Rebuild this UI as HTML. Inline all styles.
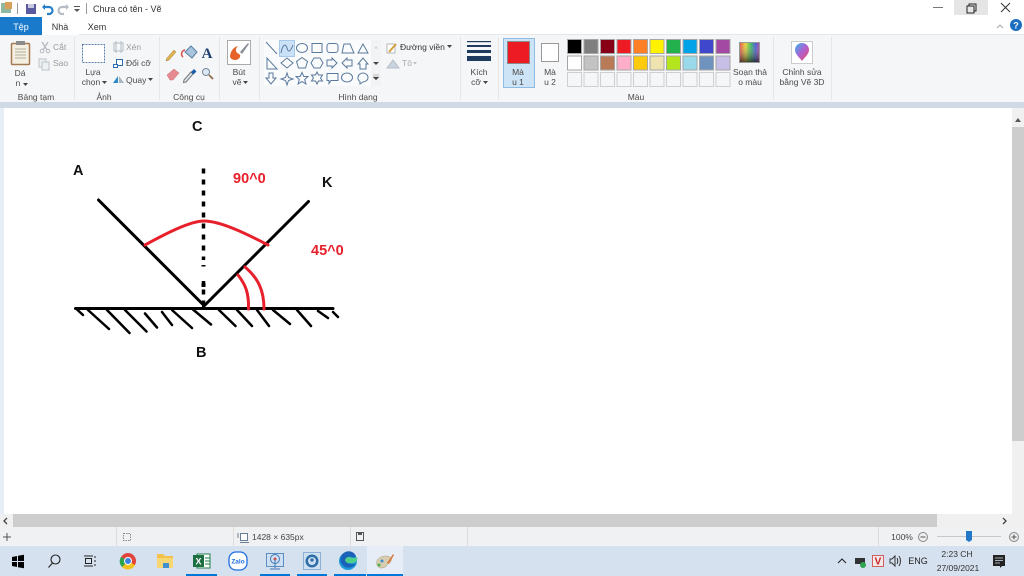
<!DOCTYPE html>
<html><head><meta charset="utf-8"><style>
html,body{margin:0;padding:0;background:#fff;overflow:hidden;width:1024px;height:576px}
svg{display:block}
text{font-family:"Liberation Sans",sans-serif;font-size:8.5px;fill:#4a4a4a}
.m{text-anchor:middle}
.s{fill:none;stroke:#5a7a9c;stroke-width:1}
.c{stroke:#a6a6a6;stroke-width:1}
.e{fill:#f5f6f7;stroke:#cfcfcf;stroke-width:1}
.d{font-weight:bold;font-size:14.5px;fill:#111}
.r{font-weight:bold;font-size:14.5px;fill:#e8202c}
.g{fill:none;stroke:#000;stroke-width:3;stroke-linecap:round}
.rl{fill:none;stroke:#e8202c;stroke-width:3;stroke-linecap:round;stroke-linejoin:round}
</style></head><body>
<svg width="1024" height="576" viewBox="0 0 1024 576" xmlns="http://www.w3.org/2000/svg">
<rect width="1024" height="576" fill="#fff"/>
<!-- title bar -->
<rect x="1" y="3" width="10" height="10" fill="#8fb8a0"/><rect x="5" y="2" width="7" height="7" fill="#d9a05b"/>
<rect x="17" y="3" width="1" height="11" fill="#999"/>
<rect x="26" y="4" width="10" height="10" fill="#5a5aa0"/><rect x="28" y="4" width="6" height="4" fill="#c8c8e0"/>
<path d="M43 7h6a3 3 0 0 1 0 7h-2" fill="none" stroke="#2a7fc9" stroke-width="2.2"/><path d="M45 4v6l-3-3z" fill="#2a7fc9"/>
<path d="M68 7h-6a3 3 0 0 0 0 7h2" fill="none" stroke="#b5bcc4" stroke-width="2.2"/><path d="M66 4v6l3-3z" fill="#b5bcc4"/>
<rect x="74" y="6" width="6" height="1" fill="#555"/><path d="M74 9h6l-3 3z" fill="#555"/>
<rect x="86" y="3" width="1" height="11" fill="#999"/>
<text x="93" y="12" style="font-size:9px;fill:#333">Chưa có tên - Vẽ</text>
<rect x="954" y="0" width="34" height="15" fill="#e5e5e5"/>
<rect x="933" y="7" width="10" height="1" fill="#777"/>
<rect x="967" y="6" width="7" height="7" fill="none" stroke="#222"/><path d="M969 6V4h7v7h-2" fill="none" stroke="#222"/>
<path d="M1001 3l9 9M1010 3l-9 9" stroke="#333" fill="none"/>
<!-- tabs -->
<rect x="0" y="17" width="42" height="18" fill="#1979ca"/>
<text x="21" y="30" class="m" style="fill:#fff;font-size:9px">Tệp</text>
<rect x="42" y="17" width="37" height="19" fill="#fff"/>
<text x="60" y="30" class="m" style="font-size:9px;fill:#333">Nhà</text>
<text x="97" y="30" class="m" style="font-size:9px;fill:#333">Xem</text>
<path d="M997 28l3-3 3 3" fill="none" stroke="#aaa"/>
<circle cx="1016" cy="25" r="6" fill="#1b6ec2"/><text x="1016" y="28.500" class="m" style="fill:#fff;font-size:9px;font-weight:bold">?</text>
<!-- ribbon -->
<rect x="0" y="35" width="1024" height="67" fill="#f5f6f7"/>
<rect x="79" y="34" width="945" height="1" fill="#e6e7e8"/><rect x="0" y="35" width="42" height="1" fill="#e6e7e8"/>
<rect x="0" y="102" width="1024" height="6" fill="#cfdae6"/>
<g fill="#e4e6e8">
<rect x="74" y="37" width="1" height="63"/><rect x="159" y="37" width="1" height="63"/><rect x="219" y="37" width="1" height="63"/><rect x="259" y="37" width="1" height="63"/><rect x="460" y="37" width="1" height="63"/><rect x="498" y="37" width="1" height="63"/><rect x="773" y="37" width="1" height="63"/><rect x="831" y="37" width="1" height="63"/>
</g>
<!-- clipboard -->
<rect x="11.500" y="43.500" width="18" height="21" rx="1" fill="#f4efe1" stroke="#a57a50" stroke-width="1.500"/>
<rect x="16" y="41" width="9" height="4" fill="#8b8b8b"/>
<path d="M15 49h11M15 52h11M15 55h11M15 58h11" stroke="#b0aca0"/>
<text x="20" y="76" class="m">Dá</text><text x="18" y="86" class="m">n</text><path d="M23 83h5l-2.500 3z" fill="#444"/>
<path d="M42 42l5 8M48 42l-5 8" stroke="#b4b9bf" stroke-width="1.300"/><circle cx="42" cy="51" r="1.800" fill="none" stroke="#b4b9bf"/><circle cx="48" cy="51" r="1.800" fill="none" stroke="#b4b9bf"/>
<text x="53" y="50" style="fill:#9a9a9a">Cắt</text>
<rect x="39" y="59" width="7" height="8" fill="#eef1f4" stroke="#bcc3ca"/><rect x="42" y="62" width="7" height="8" fill="#eef1f4" stroke="#bcc3ca"/>
<text x="53" y="66" style="fill:#9a9a9a">Sao</text>
<text x="36" y="100" class="m">Bảng tạm</text>
<!-- image -->
<rect x="82.500" y="44.500" width="22" height="18" fill="#fff" stroke="#5a7fa8" stroke-dasharray="2 1"/>
<text x="93" y="75" class="m">Lựa</text><text x="91" y="85" class="m">chọn</text><path d="M102 81h5l-2.500 3z" fill="#444"/>
<rect x="114" y="43" width="9" height="8" fill="none" stroke="#b4bcc6"/><path d="M116 41v12M121 41v12" stroke="#b4bcc6"/>
<text x="126" y="50" style="fill:#9a9a9a">Xén</text>
<rect x="116.500" y="59.500" width="6" height="6" fill="#fff" stroke="#2a6cb0"/><rect x="113.500" y="64.500" width="4" height="3" fill="#fff" stroke="#2a6cb0"/>
<text x="126" y="66">Đổi cỡ</text>
<path d="M113 83l5-7v7z" fill="#2b8bc9"/><path d="M119 76l5 7h-5z" fill="#aab4bf"/>
<text x="126" y="83">Quay</text><path d="M148 78h5l-2.500 3z" fill="#444"/>
<text x="104" y="100" class="m">Ảnh</text>
<!-- tools -->
<path d="M167 58l7-8 2 2-7 8-3 1z" fill="#e2b34f" stroke="#9a7a3a" stroke-width=".5"/>
<path d="M185 52l6-6 6 6-5 6z" fill="#a9c4de" stroke="#5a7f9f"/><path d="M183 57a4 4 0 0 1 2-7" fill="none" stroke="#d8504a" stroke-width="1.500"/>
<text x="207" y="58" class="m" style="font-family:'Liberation Serif',serif;font-weight:bold;font-size:15px;fill:#1f3f70">A</text>
<path d="M167 75l7-6 5 4-6 7h-3z" fill="#e58a90" stroke="#c56a70" stroke-width=".5"/>
<path d="M184 80l7-8 2 2-7 8-2.500.500z" fill="#dfe7ef" stroke="#777"/><path d="M191 72l3-3 2.500 2.500-3 3z" fill="#1f5fa8"/>
<circle cx="206" cy="72" r="3.500" fill="#dbe8f5" stroke="#7a8a9a"/><path d="M209 75l4 4" stroke="#8a6a4a" stroke-width="1.700"/>
<text x="189" y="100" class="m">Công cụ</text>
<!-- brushes -->
<rect x="227.500" y="40.500" width="23" height="24" fill="#fff" stroke="#aaa"/>
<path d="M230 56c1-6 4-9 8-10-3 3-3 6 1 8 3 2 0 6-4 6-3 0-5-2-5-4z" fill="#e5622a"/><path d="M240 52l8-9 1 1-7 10z" fill="#8a8f96"/>
<text x="239" y="75" class="m">Bút</text><text x="237" y="85" class="m">vẽ</text><path d="M243 81h5l-2.500 3z" fill="#444"/>
<!-- shapes -->
<rect x="264" y="40" width="107" height="46" fill="#fafbfc"/>
<rect x="279.500" y="40.500" width="15" height="16" fill="#cbe1f7" stroke="#a5c8ea"/>
<g class="s">
<path d="M266 42l11 12"/>
<path d="M281 53c2-10 5-9 6-5s3 5 6-3"/>
<ellipse cx="302" cy="48" rx="5.500" ry="4.500"/>
<rect x="312" y="43.500" width="10" height="9"/>
<rect x="327" y="43.500" width="11" height="9" rx="2.500"/>
<path d="M342 53l2-9h6l4 9z"/>
<path d="M358 53l5-9 5 9z"/>
<path d="M267 58v11h10z"/>
<path d="M287 58l6 5-6 5-6-5z"/>
<path d="M302 57.500l5.500 4-2 6.500h-7l-2-6.500z"/>
<path d="M314 58h6l3 5-3 5h-6l-3-5z"/>
<path d="M327 60h5v-2l5 5-5 5v-2h-5z"/>
<path d="M352 60h-5v-2l-5 5 5 5v-2h5z"/>
<path d="M360 69v-5h-2l5-6 5 6h-2v5z"/>
<path d="M269 73v5h-3l5 6 5-6h-3v-5z"/>
<path d="M287 73l1.500 4.500 4.500 1.500-4.500 1.500-1.500 4.500-1.500-4.500-4.500-1.500 4.500-1.500z"/>
<path d="M302 72.500l1.800 4h4.200l-3.300 3 1.200 4.500-3.900-2.500-3.900 2.500 1.200-4.500-3.300-3h4.200z"/>
<path d="M317 72l1.500 3h4l-2 3 2 3h-4l-1.500 3-1.500-3h-4l2-3-2-3h4z"/>
<path d="M327 73.500h11v7h-7l-2 3v-3h-2z"/>
<ellipse cx="347" cy="77.500" rx="5.500" ry="4.500"/>
<path d="M358 77.500a5 4.500 0 1 1 5 4.500l-3 2v-2.500a5 4 0 0 1-2-4z"/>
</g>
<rect x="371" y="40" width="10" height="46" fill="#f2f3f5"/>
<path d="M374 48.500h4l-2-2.500z" fill="#d5d5d5"/><path d="M373 62h6l-3 3z" fill="#444"/><path d="M373 75h6M373 77h6l-3 3z" fill="#444" stroke="#444" stroke-width=".3"/>
<rect x="387" y="44" width="8" height="9" fill="#fff" stroke="#b8b8b8"/><path d="M389 52l7-8" stroke="#d4a03f" stroke-width="2"/>
<text x="400" y="50" style="fill:#333">Đường viền</text><path d="M447 45h5l-2.500 3z" fill="#444"/>
<path d="M387 68l6-8 6 8z" fill="#c8d3de" stroke="#b5bfc9"/>
<text x="402" y="66" style="fill:#aaa">Tô</text><path d="M413 62h4l-2 2.500z" fill="#bbb"/>
<text x="358" y="100" class="m">Hình dạng</text>
<!-- size -->
<rect x="467" y="41" width="24" height="1.200" fill="#1f3a5f"/><rect x="467" y="45" width="24" height="2" fill="#1f3a5f"/><rect x="467" y="50" width="24" height="3" fill="#1f3a5f"/><rect x="467" y="56" width="24" height="5" fill="#1f3a5f"/>
<text x="479" y="75" class="m">Kích</text><text x="476" y="85" class="m">cỡ</text><path d="M483 81h5l-2.500 3z" fill="#444"/>
<!-- colour 1/2 -->
<rect x="503.500" y="38.500" width="31" height="49" fill="#cde4f7" stroke="#8fbce3"/>
<rect x="507.500" y="41.500" width="22" height="22" fill="#ed1c24" stroke="#8a8a8a"/>
<text x="518" y="75" class="m">Mà</text><text x="518" y="85" class="m">u 1</text>
<rect x="541.500" y="43.500" width="17" height="18" fill="#fff" stroke="#9a9a9a"/>
<text x="550" y="75" class="m">Mà</text><text x="550" y="85" class="m">u 2</text>
<!-- palette -->
<g class="c">
<rect x="567.500" y="39.500" width="14" height="14" fill="#000"/><rect x="584" y="39.500" width="14" height="14" fill="#7f7f7f"/><rect x="600.500" y="39.500" width="14" height="14" fill="#880015"/><rect x="617" y="39.500" width="14" height="14" fill="#ed1c24"/><rect x="633.500" y="39.500" width="14" height="14" fill="#ff7f27"/><rect x="650" y="39.500" width="14" height="14" fill="#fff200"/><rect x="666.500" y="39.500" width="14" height="14" fill="#22b14c"/><rect x="683" y="39.500" width="14" height="14" fill="#00a2e8"/><rect x="699.500" y="39.500" width="14" height="14" fill="#3f48cc"/><rect x="716" y="39.500" width="14" height="14" fill="#a349a4"/>
<rect x="567.500" y="56" width="14" height="14" fill="#fff"/><rect x="584" y="56" width="14" height="14" fill="#c3c3c3"/><rect x="600.500" y="56" width="14" height="14" fill="#b97a57"/><rect x="617" y="56" width="14" height="14" fill="#ffaec9"/><rect x="633.500" y="56" width="14" height="14" fill="#ffc90e"/><rect x="650" y="56" width="14" height="14" fill="#efe4b0"/><rect x="666.500" y="56" width="14" height="14" fill="#b5e61d"/><rect x="683" y="56" width="14" height="14" fill="#99d9ea"/><rect x="699.500" y="56" width="14" height="14" fill="#7092be"/><rect x="716" y="56" width="14" height="14" fill="#c8bfe7"/>
</g>
<g class="e">
<rect x="567.500" y="72.500" width="14" height="14"/><rect x="584" y="72.500" width="14" height="14"/><rect x="600.500" y="72.500" width="14" height="14"/><rect x="617" y="72.500" width="14" height="14"/><rect x="633.500" y="72.500" width="14" height="14"/><rect x="650" y="72.500" width="14" height="14"/><rect x="666.500" y="72.500" width="14" height="14"/><rect x="683" y="72.500" width="14" height="14"/><rect x="699.500" y="72.500" width="14" height="14"/><rect x="716" y="72.500" width="14" height="14"/>
</g>
<text x="636" y="100" class="m">Màu</text>
<!-- edit colours -->
<defs>
<linearGradient id="rb" x1="0" x2="1" y1="0" y2="0"><stop offset="0" stop-color="#e83a3a"/><stop offset=".3" stop-color="#e8d020"/><stop offset=".55" stop-color="#2fb84a"/><stop offset=".8" stop-color="#3050d0"/><stop offset="1" stop-color="#b030a0"/></linearGradient>
<linearGradient id="rv" x1="0" x2="0" y1="0" y2="1"><stop offset="0" stop-color="#fff" stop-opacity=".1"/><stop offset="1" stop-color="#222" stop-opacity=".75"/></linearGradient>
<linearGradient id="p3" x1="0" x2="1" y1="0" y2="1"><stop offset="0" stop-color="#35b5ea"/><stop offset=".5" stop-color="#b060d0"/><stop offset="1" stop-color="#f04a60"/></linearGradient>
</defs>
<rect x="739.500" y="42.500" width="20" height="20" fill="url(#rb)" stroke="#999"/><rect x="740" y="43" width="19" height="19" fill="url(#rv)"/>
<text x="750" y="75" class="m">Soạn thả</text><text x="750" y="85" class="m">o màu</text>
<rect x="791.500" y="41.500" width="21" height="22" fill="#fff" stroke="#ccc"/>
<path d="M802 61c-3-4-7-7-7-11a7 7 0 0 1 14 0c0 4-4 7-7 11z" fill="url(#p3)"/>
<text x="802" y="75" class="m">Chỉnh sửa</text><text x="802" y="85" class="m">bằng Vẽ 3D</text>
<!-- canvas surround -->
<rect x="0" y="108" width="4" height="406" fill="#e6edf5"/>
<rect x="1012" y="108" width="12" height="406" fill="#f0f0f0"/>
<rect x="1012" y="127" width="12" height="314" fill="#cdcdcd"/>
<path d="M1015 122l3-4 3 4z" fill="#555"/>
<!-- drawing -->
<g class="g">
<path d="M98.500 200L203.500 305"/>
<path d="M308.500 201.500L203.500 306.500"/>
<path d="M75.500 308.500H333"/>
<path stroke-width="2.500" d="M77 309.500l6 5.500M88 310l21 19M107 310l22.500 23M125 310l21.500 21.500M145 313.500l12 14M162 312l10 13M172 310l20 18M193 309.500l18 15M219 310l16.500 16M237 310l15 16M257 310l12 16M273 310l17 14M297 310l14 16M318 311l10 7M333 312l5 5"/>
</g>
<path d="M203.500 168.500V305" fill="none" stroke="#000" stroke-width="3.500" stroke-dasharray="5 6"/>
<rect x="200" y="260" width="6" height="21" fill="#fff"/>
<rect x="201.500" y="265" width="4" height="1.500" fill="#000"/><rect x="201.500" y="283" width="4" height="4" fill="#000"/>
<path class="rl" d="M145 245C165 234 190 221 204 221C220 221 245 233 268 245"/>
<path class="rl" d="M238 275C245 284 249 292 248.500 309"/>
<path class="rl" d="M245 267C258 278 264 290 264 309"/>
<text x="73" y="175" class="d">A</text>
<text x="192" y="131" class="d">C</text>
<text x="322" y="187" class="d">K</text>
<text x="196" y="357" class="d">B</text>
<text x="233" y="183" class="r">90^0</text>
<text x="311" y="255" class="r">45^0</text>
<!-- h scrollbar -->
<rect x="0" y="514" width="1012" height="13" fill="#f0f0f0"/>
<rect x="13" y="514" width="924" height="13" fill="#cdcdcd"/>
<path d="M7 518l-3 3 3 3" fill="none" stroke="#444" stroke-width="1.300"/>
<path d="M1003 518l3 3-3 3" fill="none" stroke="#444" stroke-width="1.300"/>
<rect x="1012" y="514" width="12" height="13" fill="#f0f0f0"/>
<!-- status bar -->
<rect x="0" y="527" width="1024" height="19" fill="#f0f1f2"/>
<g fill="#dcdcdc"><rect x="116" y="527" width="1" height="19"/><rect x="233" y="527" width="1" height="19"/><rect x="350" y="527" width="1" height="19"/><rect x="467" y="527" width="1" height="19"/><rect x="878" y="527" width="1" height="19"/></g>
<path d="M3 537h8M7 533v8" stroke="#555" fill="none"/>
<rect x="123.500" y="533.500" width="7" height="7" fill="none" stroke="#888" stroke-dasharray="1.500 1"/>
<rect x="240.500" y="533.500" width="7" height="7" fill="#fff" stroke="#6a7f94"/><path d="M240 542.500h9M238 533v5" stroke="#6a7f94"/>
<text x="252" y="540" style="fill:#444">1428 × 635px</text>
<rect x="356.500" y="532.500" width="7" height="8" fill="none" stroke="#555"/><rect x="358" y="533" width="4" height="2" fill="#555"/>
<text x="902" y="540" class="m" style="fill:#444">100%</text>
<circle cx="923" cy="537" r="4.500" fill="#eee" stroke="#888"/><path d="M920.500 537h5" stroke="#555"/>
<rect x="937" y="536" width="64" height="1" fill="#c8c8c8"/>
<path d="M966 531h6v9l-3 2-3-2z" fill="#2478c8"/>
<circle cx="1014" cy="537" r="4.500" fill="#eee" stroke="#888"/><path d="M1011.500 537h5M1014 534.500v5" stroke="#555"/>
<!-- taskbar -->
<rect x="0" y="546" width="1024" height="30" fill="#d6e1f0"/>
<rect x="367" y="546" width="36" height="30" fill="#e7edf6"/>
<g fill="#0078d7"><rect x="186" y="574" width="31" height="2"/><rect x="260" y="574" width="30" height="2"/><rect x="297" y="574" width="30" height="2"/><rect x="334" y="574" width="32" height="2"/><rect x="367" y="574" width="36" height="2"/></g>
<path d="M12 557l5-1v5h-5zM18 555.800l6-1v6.200h-6zM12 562h5v5l-5-1zM18 562h6v6.200l-6-1z" fill="#000"/>
<circle cx="55.500" cy="559.500" r="4.500" fill="none" stroke="#222" stroke-width="1.100"/><path d="M52.500 563l-4 4.500" stroke="#222" stroke-width="1.100"/>
<path d="M84 556h9M84 566h9" stroke="#222"/><rect x="85.500" y="558.500" width="6" height="5" fill="none" stroke="#222"/><path d="M95 556v2M95 560v2M95 564v2" stroke="#222"/>
<circle cx="128" cy="561" r="8" fill="#e0443a"/><path d="M128 561L135 565A8 8 0 0 1 122 567z" fill="#f3c220"/><path d="M128 561L122 567A8 8 0 0 1 121 557z" fill="#2ea44f"/><circle cx="128" cy="561" r="4" fill="#fff"/><circle cx="128" cy="561" r="3" fill="#3b82e0"/>
<path d="M157 554h6l2 2h8v12h-16z" fill="#f2c14c"/><rect x="157" y="558" width="16" height="10" fill="#f7d774"/><rect x="163" y="563" width="6" height="5" fill="#3d8fd0"/>
<rect x="197" y="554" width="13" height="14" fill="#fff" stroke="#21804a"/><rect x="193" y="555" width="11" height="12" fill="#1d6f42"/><text x="198.500" y="564.500" class="m" style="fill:#fff;font-size:9px;font-weight:bold">X</text><path d="M205 558h5M205 561h5M205 564h5" stroke="#21804a"/>
<rect x="229" y="552" width="18" height="18" rx="7" fill="#fff" stroke="#1e6fe0" stroke-width="1.300"/><text x="238" y="563.500" class="m" style="fill:#1e6fe0;font-size:6.500px;font-weight:bold">Zalo</text>
<rect x="266.500" y="553.500" width="17" height="13" fill="#cfe0f2" stroke="#5b8fc4"/><circle cx="275" cy="559" r="4.500" fill="none" stroke="#3d78b4"/><circle cx="275" cy="559" r="1.500" fill="#c45050"/><path d="M275 560v8M270 569h10" stroke="#3d78b4"/>
<rect x="303.500" y="552.500" width="17" height="17" fill="#cfe0f2" stroke="#8fb0d2"/><circle cx="312" cy="561" r="6.500" fill="#2e6ea8"/><circle cx="312" cy="561" r="4" fill="#cfe0f2"/><circle cx="312" cy="560" r="1.700" fill="#2e6ea8"/>
<circle cx="348" cy="561" r="9" fill="#1c9bd8"/><path d="M341 557a8 8 0 0 1 15-1c-1 3-5 0-8 1-3 1-2 6 2 7 3 .5 5 0 6-1a8 8 0 0 1-14 1c-2-2-2-5-1-7z" fill="#1a62b8"/><path d="M352 558a4 3 0 1 0-2 5c3 0 6 0 7-3 .5-1 .3-2 0-3-1 1-3 1-5 1z" fill="#4fd08a"/>
<path d="M377 565c-2-5 3-9 9-9 4 0 6 2 5 5-1 2-3 2-4 4s-3 3-6 3c-2 0-3-1-4-3z" fill="#d8cdb0" stroke="#a89a78" stroke-width=".5"/><circle cx="382" cy="561" r="1.500" fill="#3d8fd0"/><circle cx="379" cy="565" r="1.500" fill="#4caf50"/><path d="M387 563l6-9 1 1-5 9z" fill="#d87a3a"/>
<!-- tray -->
<path d="M838 563l4-4 4 4" fill="none" stroke="#222" stroke-width="1.100"/>
<rect x="855" y="558" width="10" height="6" fill="#333"/><circle cx="863" cy="565" r="3" fill="#2ea44f"/>
<rect x="872.500" y="555.500" width="11" height="11" fill="#f4e8e8" stroke="#d06060"/><text x="878" y="564.500" class="m" style="fill:#c82020;font-size:10px;font-weight:bold">V</text>
<path d="M890 559h2l3-3v10l-3-3h-2z" fill="none" stroke="#333"/><path d="M897 558c1 2 1 4 0 6M899 556c2 3 2 7 0 10" fill="none" stroke="#333"/>
<text x="918" y="564" class="m" style="fill:#222;font-size:9px">ENG</text>
<text x="957" y="557" class="m" style="fill:#333;font-size:8.500px">2:23 CH</text>
<text x="958" y="571" class="m" style="fill:#333;font-size:8.500px">27/09/2021</text>
<path d="M993 555h12v11h-3l-2 2v-2h-7z" fill="#222"/><path d="M995 558h8M995 560.500h8M995 563h5" stroke="#d6e1f0" stroke-width=".8"/>
</svg>
</body></html>
